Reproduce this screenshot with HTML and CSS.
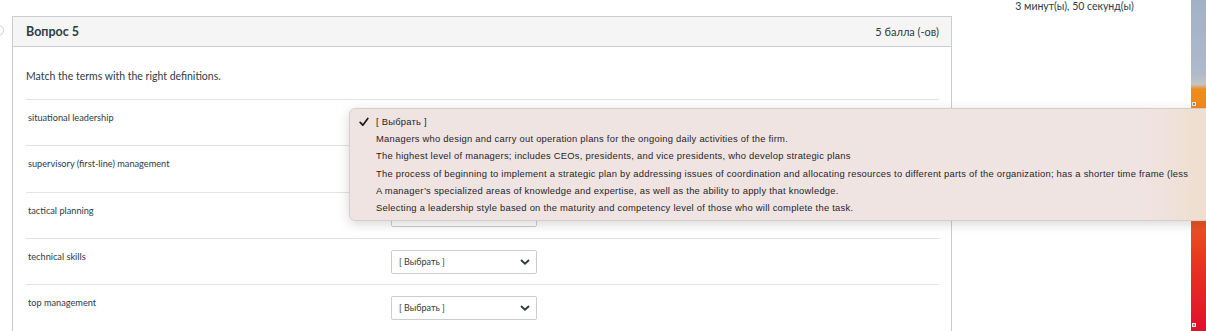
FILE: index.html
```html
<!DOCTYPE html>
<html lang="ru">
<head>
<meta charset="utf-8">
<title>Вопрос 5</title>
<link rel="stylesheet" href="styles.css">
</head>
<body>
<div class="screen">
  <div class="page">
    <div class="main">
      <span class="flag"></span>
      <section class="card">
        <header class="card-head">
          <h2 class="title">Вопрос 5</h2>
          <span class="points">5 балла (-ов)</span>
        </header>
        <div class="card-body">
          <p class="intro">Match the terms with the right definitions.</p>
          <div class="rows">
            <div class="row"><span class="term">situational leadership</span><span class="select covered"><span class="label">[ Выбрать ]</span><svg class="chev" viewBox="0 0 10 6" width="10" height="6"><path d="M1 1l4 3.6L9 1" fill="none" stroke="#2d3b45" stroke-width="1.9"/></svg></span></div>
            <div class="row"><span class="term">supervisory (first-line) management</span><span class="select covered"><span class="label">[ Выбрать ]</span><svg class="chev" viewBox="0 0 10 6" width="10" height="6"><path d="M1 1l4 3.6L9 1" fill="none" stroke="#2d3b45" stroke-width="1.9"/></svg></span></div>
            <div class="row"><span class="term">tactical planning</span><span class="select covered"><span class="label">[ Выбрать ]</span><svg class="chev" viewBox="0 0 10 6" width="10" height="6"><path d="M1 1l4 3.6L9 1" fill="none" stroke="#2d3b45" stroke-width="1.9"/></svg></span></div>
            <div class="row"><span class="term">technical skills</span><span class="select"><span class="label">[ Выбрать ]</span><svg class="chev" viewBox="0 0 10 6" width="10" height="6"><path d="M1 1l4 3.6L9 1" fill="none" stroke="#2d3b45" stroke-width="1.9"/></svg></span></div>
            <div class="row"><span class="term">top management</span><span class="select"><span class="label">[ Выбрать ]</span><svg class="chev" viewBox="0 0 10 6" width="10" height="6"><path d="M1 1l4 3.6L9 1" fill="none" stroke="#2d3b45" stroke-width="1.9"/></svg></span></div>
          </div>
        </div>
      </section>
    </div>
    <aside class="side">
      <div class="timer">3 минут(ы), 50 секунд(ы)</div>
    </aside>
  </div>
  <div class="wall">
    <span class="wall-mark m1"></span>
    <span class="wall-mark m2"></span>
    <span class="wall-mark m3"></span>
  </div>
  <ul class="menu">
    <li class="opt selected"><svg class="check" viewBox="0 0 10 10" width="10" height="10"><path d="M1.2 5.4l2.6 2.8L8.8 1.4" fill="none" stroke="#1a1a1a" stroke-width="1.7" stroke-linecap="round" stroke-linejoin="round"/></svg>[ Выбрать ]</li>
    <li class="opt">Managers who design and carry out operation plans for the ongoing daily activities of the firm.</li>
    <li class="opt">The highest level of managers; includes CEOs, presidents, and vice presidents, who develop strategic plans</li>
    <li class="opt">The process of beginning to implement a strategic plan by addressing issues of coordination and allocating resources to different parts of the organization; has a shorter time frame (less</li>
    <li class="opt">A manager’s specialized areas of knowledge and expertise, as well as the ability to apply that knowledge.</li>
    <li class="opt">Selecting a leadership style based on the maturity and competency level of those who will complete the task.</li>
  </ul>
</div>
</body>
</html>
```

FILE: styles.css
```css
* { box-sizing: border-box; }
html, body { margin: 0; padding: 0; }
body {
  background: #fff;
  font-family: Lato, "Noto Sans", sans-serif;
  color: #2d3b45;
  width: 1206px;
  height: 331px;
  overflow: hidden;
}
.screen {
  position: relative;
  display: flex;
  width: 1206px;
  height: 331px;
  overflow: hidden;
}
.page {
  flex: 1;
  display: flex;
  background: #fff;
}
.main {
  display: flex;
  align-items: flex-start;
  padding-top: 16px;
}
.flag {
  width: 11px;
  height: 11px;
  margin-top: 9px;
  margin-left: -7px;
  margin-right: 8px;
  border: 1.5px solid #c9ced3;
  border-radius: 50%;
}
.card {
  width: 940px;
  height: 340px;
  border: 1px solid #c7cdd1;
  border-bottom: none;
}
.card-head {
  display: flex;
  justify-content: space-between;
  align-items: center;
  height: 30px;
  padding: 0 12px 0 13px;
  background: #f5f5f5;
  border-bottom: 1px solid #c7cdd1;
}
.title {
  margin: 0;
  font-size: 12.5px;
  font-weight: 700;
  color: #2d3b45;
}
.points {
  font-size: 11px;
  color: #2d3b45;
}
.card-body {
  padding: 22px 12px 0 13px;
}
.intro {
  margin: 0 0 16px;
  font-size: 10.5px;
  line-height: 14px;
}
.rows { display: flex; flex-direction: column; }
.row {
  display: flex;
  align-items: center;
  height: 46.3px;
  border-top: 1px solid #dfe3e5;
}
.term {
  align-self: flex-start;
  width: 365px;
  padding: 11px 0 0 2px;
  font-size: 9.2px;
  line-height: 14px;
}
.select {
  display: flex;
  justify-content: space-between;
  align-items: center;
  width: 146px;
  height: 24px;
  padding: 0 6px 0 7px;
  border: 1px solid #c7cdd1;
  border-radius: 2px;
  font-size: 9px;
  color: #2d3b45;
  background: #fff;
}
.covered .label,
.covered .chev { visibility: hidden; }
.chev { display: block; }
.side {
  flex: 1;
  display: flex;
  justify-content: center;
}
.timer {
  margin-left: 6px;
  font-size: 10.5px;
  line-height: 12px;
  color: #2d3b45;
}
.wall {
  position: relative;
  width: 15px;
  background: linear-gradient(180deg, #a3b1c7 0%, #aeb9ca 22%, #c4c3c2 25.5%, #ef8a1c 27%, #f08a1e 33%, #e9d6c4 34%, #e8d3c0 66%, #ea5424 67%, #e8381f 78%, #e0102c 100%);
}
.wall-mark {
  position: absolute;
  left: 1px;
  width: 4px;
  height: 4px;
  background: #8d8d8d;
  border: 1px solid #e6e6e6;
}
.m1 { top: 102px; }
.m2 { top: 217px; }
.m3 { top: 323px; }
.menu {
  position: absolute;
  left: 349px;
  top: 108px;
  width: 900px;
  margin: 0;
  padding: 4px 0;
  list-style: none;
  background: linear-gradient(90deg, #f0e4e3 0%, #f0e4e3 88%, #efdfd2 94%, #efdcc9 100%);
  border: 1px solid #d8cdcc;
  border-radius: 6px;
  box-shadow: 0 3px 12px rgba(0,0,0,0.16);
  font-family: "Liberation Sans", Arial, sans-serif;
  font-size: 9.4px;
  letter-spacing: 0.25px;
  color: #1f1f1f;
}
.opt {
  position: relative;
  width: 860px;
  height: 17.2px;
  padding-left: 26px;
  line-height: 17.2px;
  white-space: nowrap;
}
.check {
  position: absolute;
  left: 9px;
  top: 4px;
}
```
